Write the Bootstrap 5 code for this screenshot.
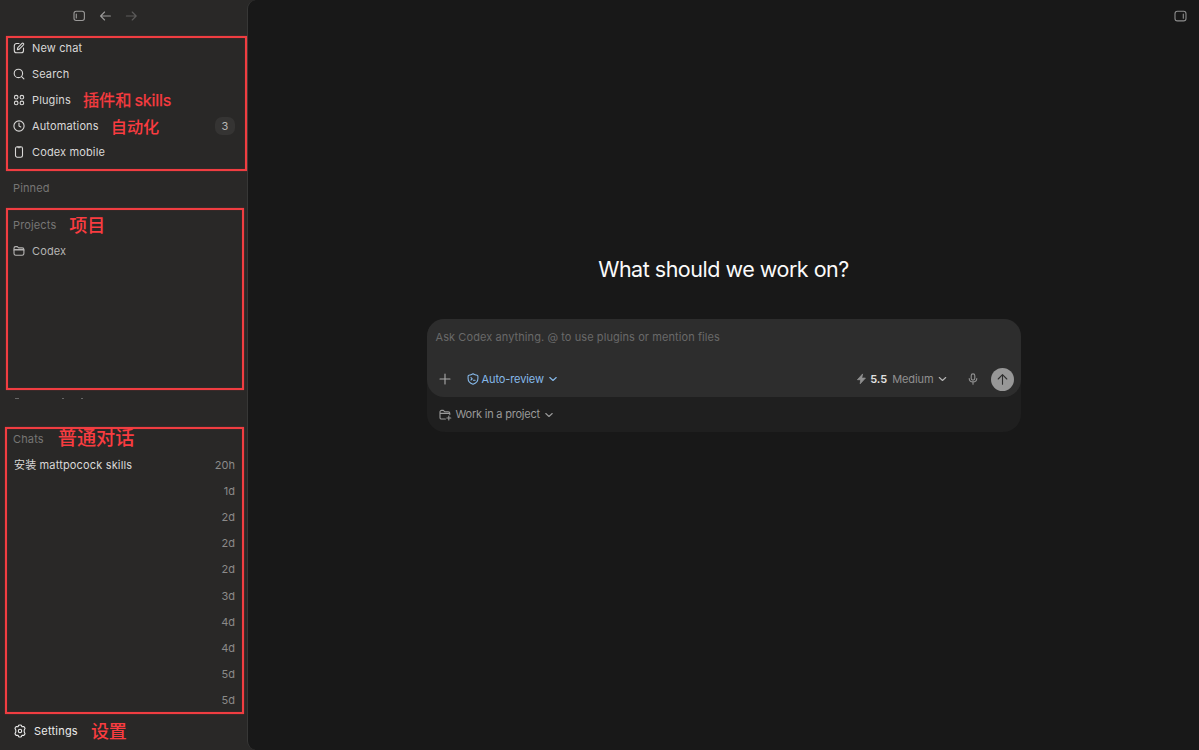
<!DOCTYPE html>
<html lang="en" data-bs-theme="dark">
<head>
<meta charset="utf-8">
<meta name="viewport" content="width=device-width, initial-scale=1">
<title>Codex</title>
<link href="https://cdn.jsdelivr.net/npm/bootstrap@5.3.0/dist/css/bootstrap.min.css" rel="stylesheet">
<style>
  body { background: #292827; font: 11px/1.3 Inter, "Noto Sans CJK SC", sans-serif; color: #d9d8d7; }
  svg { fill: none; stroke: currentColor; stroke-width: 1.1; stroke-linecap: round; stroke-linejoin: round; flex: none; display: block; }
  .side { width: 247px; letter-spacing: .14px; }
  .topbar { height: 34.6px; padding: 10px 0 0 73px; gap: 14px; color: #9b9a99; }
  .line { height: 26.13px; padding: 0 12px 0 13px; white-space: nowrap; }
  .line svg { margin-right: 7px; }
  .title { color: #777675; }
  .age { color: #8b8a89; letter-spacing: 0; }
  .count { width: 20px; height: 18px; border-radius: 7px; background: #353433; color: #b8b7b6; }
  .pinned { margin-top: 10px; }
  .projects { margin-top: 10.8px; height: 213.8px; }
  .folder { color: #b5b4b3; }
  .traces i { position: absolute; top: 186px; height: 1px; background: #666; }
  .chat { margin-left: 1px; letter-spacing: .16px; }
  .settings { margin-top: 5px; color: #ececec; letter-spacing: .22px; }
  .note { color: #f93c40; font-size: 18px; line-height: 1; font-weight: 500; letter-spacing: 0; }
  .note-a { margin-left: 12px; font-size: 16.2px; font-weight: 400; -webkit-text-stroke: .25px; }
  .note-a .latin { margin-left: 3px; letter-spacing: -.2px; }
  .note-b { margin-left: 12px; font-size: 16.2px; padding-top: 2px; }
  .note-c { margin-left: 13px; padding-top: 1px; }
  .note-d { margin-left: 14px; font-size: 19.2px; }
  .note-e { margin-left: 13px; padding-top: 1px; }
  .frame { position: absolute; border: 2px solid #f03d41; box-shadow: 0 0 1px #f03d4199, inset 0 0 1px #f03d4199; pointer-events: none; }
  .f1 { left: 6px; top: 36px; width: 241px; height: 135px; }
  .f2 { left: 6px; top: 208px; width: 238px; height: 182px; }
  .f3 { left: 5px; top: 427px; width: 239px; height: 287px; }
  .pane { background: #181818; border-left: 1px solid #373736; border-radius: 9px 0 0 9px; }
  .panel-toggle { padding: 10px 12px 0 0; color: #8d8d8d; }
  h1 { margin: 232px 0 0; font-size: 21.5px; font-weight: 400; line-height: 28px; color: #fafafa; letter-spacing: -.49px; }
  .composer { width: 594px; height: 113px; margin-top: 36px; border-radius: 18px; background: #1f1f1f; }
  .entry { height: 78px; border-radius: 17px; background: #2d2d2d; }
  .hint { padding: 11px 9px 0; color: #696969; line-height: 14px; letter-spacing: .08px; }
  .tools { height: 30px; padding: 0 7px 6px 12px; }
  .mode { margin-left: 16px; color: #86b9ea; }
  .mode span { margin: 0 5px 0 3px; letter-spacing: -.1px; }
  .model { color: #909090; }
  .model b { margin: 0 5px 0 3px; color: #e1e1e1; }
  .model span { letter-spacing: -.1px; }
  .mic { margin: 0 12px 0 20px; color: #929292; }
  .send { width: 23px; height: 23px; border-radius: 50%; background: #979797; color: #2d2d2d; }
  .place { height: 35px; padding-left: 12px; color: #999; }
  .place span { margin: 0 5px 0 4px; letter-spacing: -.22px; }
</style>
</head>
<body class="vh-100 overflow-hidden d-flex position-relative">
<aside class="side d-flex flex-column flex-shrink-0">
  <div class="topbar d-flex">
    <svg width="12" height="12" viewBox="0 0 12 12"><rect x="1" y="1.3" width="10.4" height="9.2" rx="2.2"/><path d="M3.3 4v4"/></svg>
    <svg width="12" height="12" viewBox="0 0 12 12"><path d="M11.4 6H1.7M5.6 2 1.6 6l4 4"/></svg>
    <svg width="12" height="12" viewBox="0 0 12 12" opacity=".45"><path d="M1.400 6h9.700M7.200 2l4 4-4 4"/></svg>
  </div>
  <nav>
    <div class="line d-flex align-items-center"><svg width="12" height="12" viewBox="0 0 12 12"><path d="M6 1.500H3.600A2.300 2.300 0 0 0 1.300 3.800v4.600a2.300 2.300 0 0 0 2.300 2.300h4.600a2.300 2.300 0 0 0 2.300-2.300V6M4.400 7.600l.4-2L9 1.400c.9-.8 2.300.5 1.500 1.400L6.300 7.100z"/></svg><span>New chat</span></div>
    <div class="line d-flex align-items-center"><svg width="12" height="12" viewBox="0 0 12 12"><circle cx="5.400" cy="5.400" r="4.200"/><path d="m8.600 8.600 2.300 2.300"/></svg><span>Search</span></div>
    <div class="line d-flex align-items-center"><svg width="12" height="12" viewBox="0 0 12 12"><circle cx="3.200" cy="3.200" r="1.800"/><circle cx="8.900" cy="3.200" r="1.800"/><circle cx="3.200" cy="8.900" r="1.800"/><circle cx="8.900" cy="8.900" r="1.800"/></svg><span>Plugins</span><span class="note note-a">插件和<span class="latin">skills</span></span></div>
    <div class="line d-flex align-items-center"><svg width="12" height="12" viewBox="0 0 12 12"><circle cx="6" cy="6" r="5.100"/><path d="M6 3.100V6l1.800 1"/></svg><span>Automations</span><span class="note note-b">自动化</span><span class="count d-flex align-items-center justify-content-center ms-auto">3</span></div>
    <div class="line d-flex align-items-center"><svg width="12" height="12" viewBox="0 0 12 12"><rect x="2.500" y=".8" width="7" height="10.400" rx="1.700"/><path d="M4.800 1.200c.1.800 2.300.8 2.400 0"/></svg><span>Codex mobile</span></div>
  </nav>
  <div class="line title d-flex align-items-center pinned">Pinned</div>
  <section class="projects position-relative">
    <div class="line title d-flex align-items-center">Projects<span class="note note-c">项目</span></div>
    <div class="line d-flex align-items-center folder"><svg width="12" height="12" viewBox="0 0 12 12"><path d="M1 4.500V3.200c0-1 .6-1.600 1.600-1.600h1.700l1.300 1.300h3.600c1 0 1.700.6 1.700 1.600v4c0 1-.7 1.700-1.700 1.700H2.700C1.700 10.200 1 9.500 1 8.500zh9.800"/><path d="M1 5h9.900"/></svg><span>Codex</span></div>
    <div class="traces"><i style="left:15px;width:4px"></i><i style="left:62px;width:2px"></i><i style="left:81px;width:2px"></i></div>
  </section>
  <section>
    <div class="line title d-flex align-items-center">Chats<span class="note note-d">普通对话</span></div>
    <div class="line d-flex align-items-center justify-content-between"><span class="chat">安装 mattpocock skills</span><span class="age">20h</span></div>
    <div class="line age d-flex align-items-center justify-content-end">1d</div>
    <div class="line age d-flex align-items-center justify-content-end">2d</div>
    <div class="line age d-flex align-items-center justify-content-end">2d</div>
    <div class="line age d-flex align-items-center justify-content-end">2d</div>
    <div class="line age d-flex align-items-center justify-content-end">3d</div>
    <div class="line age d-flex align-items-center justify-content-end">4d</div>
    <div class="line age d-flex align-items-center justify-content-end">4d</div>
    <div class="line age d-flex align-items-center justify-content-end">5d</div>
    <div class="line age d-flex align-items-center justify-content-end">5d</div>
  </section>
  <div class="line settings d-flex align-items-center"><svg width="14" height="14" viewBox="0 0 14 14"><path d="M5.700 1.300Q7 .6 8.300 1.300L9 2.700l1.600-.1q1.300.6 1.400 2L11.200 6v2l.8 1.400q-.1 1.400-1.400 2L9 11.300l-.7 1.400q-1.300.7-2.600 0L5 11.300l-1.600.1q-1.300-.6-1.400-2L2.800 8V6L2 4.600q.1-1.400 1.400-2L5 2.700z"/><circle cx="7" cy="7" r="1.700"/></svg><span>Settings</span><span class="note note-e">设置</span></div>
</aside>
<main class="pane flex-grow-1 d-flex flex-column align-items-center">
  <div class="panel-toggle align-self-end"><svg width="13" height="13" viewBox="0 0 13 13"><rect x="1" y="1.300" width="11" height="9.600" rx="2.400"/><path d="M9.300 4v4.200"/></svg></div>
  <h1>What should we work on?</h1>
  <div class="composer">
    <div class="entry d-flex flex-column justify-content-between">
      <div class="hint">Ask Codex anything. @ to use plugins or mention files</div>
      <div class="tools d-flex align-items-center">
        <svg width="12" height="12" viewBox="0 0 12 12" color="#aaa"><path d="M6 1v10M1 6h10"/></svg>
        <div class="mode d-flex align-items-center">
          <svg width="12" height="12" viewBox="0 0 12 12"><path d="M6 .8c1.400.9 2.600 1.300 4.100 1.500.5.100.8.400.8.900v2.300c0 2.800-1.900 4.700-4.900 5.700-3-1-4.900-2.900-4.900-5.700V3.200c0-.5.300-.8.800-.9C3.400 2.100 4.600 1.700 6 .8zM4 4.600l1.200 1.200L4 7M6.500 7.200h1.600"/></svg>
          <span>Auto-review</span>
          <svg width="8" height="8" viewBox="0 0 8 8"><path d="m.8 2.500 3.200 3 3.200-3"/></svg>
        </div>
        <div class="model d-flex align-items-center ms-auto">
          <svg width="11" height="12" viewBox="0 0 11 12"><path fill="currentColor" stroke-width=".8" d="M6.400 1.200 1.400 6.700h3.300l-.5 4.100 5.200-5.700H6z"/></svg>
          <b class="fw-semibold">5.5</b><span>Medium</span>
          <svg class="ms-1" width="9" height="8" viewBox="0 0 9 8" color="#b6b6b6"><path d="m1.300 2.500 3.200 3 3.200-3"/></svg>
        </div>
        <svg class="mic" width="12" height="12" viewBox="0 0 12 12"><rect x="4.200" y=".9" width="3.600" height="6.200" rx="1.800"/><path d="M2.200 5.500c.2 4.500 7.400 4.500 7.600 0M6 9v2.200"/></svg>
        <div class="send d-flex align-items-center justify-content-center"><svg width="13" height="13" viewBox="0 0 13 13"><path d="M6.500 11.300V1.700M2.200 6l4.300-4.300L10.800 6"/></svg></div>
      </div>
    </div>
    <div class="place d-flex align-items-center">
      <svg width="13" height="12" viewBox="0 0 13 12"><path d="M6.400 10H2.600C1.600 10 1 9.400 1 8.400V3c0-1 .6-1.600 1.600-1.600h1.700l1.300 1.300h3.600c1 0 1.600.6 1.600 1.600v1.300M1 4.400h9.800M9.800 7v4M7.800 9h4"/></svg>
      <span>Work in a project</span>
      <svg width="8" height="8" viewBox="0 0 8 8"><path d="m.8 2.500 3.200 3 3.200-3"/></svg>
    </div>
  </div>
</main>
<div class="frame f1"></div>
<div class="frame f2"></div>
<div class="frame f3"></div>
<script src="https://cdn.jsdelivr.net/npm/bootstrap@5.3.0/dist/js/bootstrap.bundle.min.js"></script>
</body>
</html>
